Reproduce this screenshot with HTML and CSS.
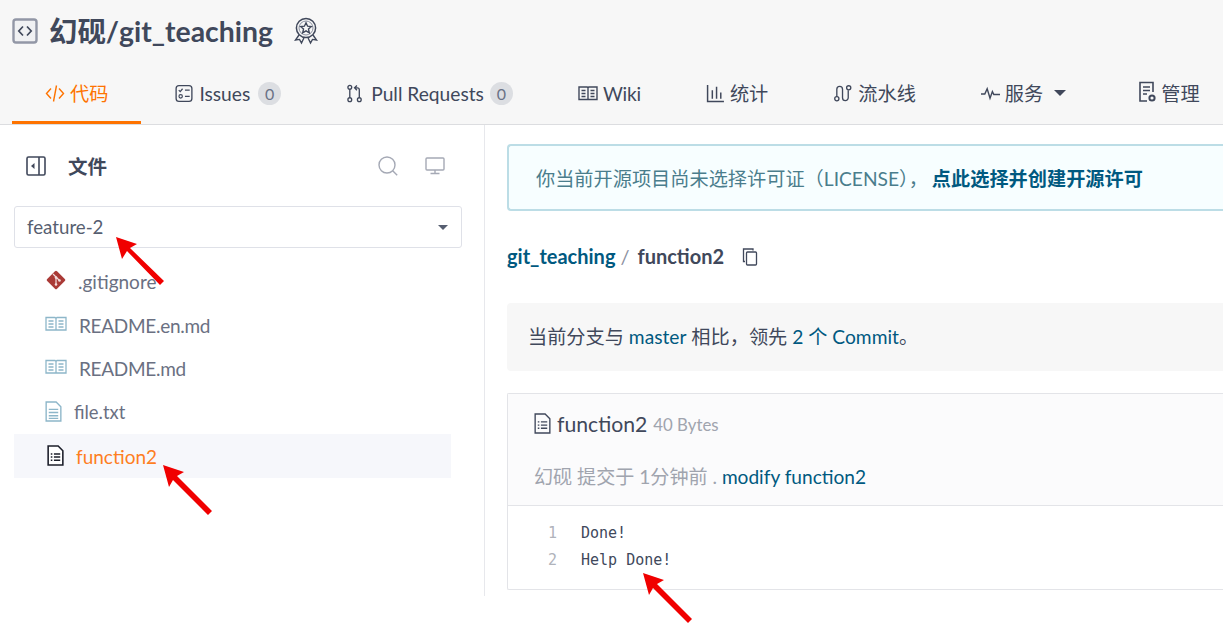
FILE: index.html
```html
<!DOCTYPE html>
<html lang="zh">
<head>
<meta charset="utf-8">
<title>幻砚/git_teaching</title>
<link rel="stylesheet" href="styles.css">
</head>
<body>
<div class="page">
  <header class="header">
    <div class="title-row">
      <svg class="repo-icon" viewBox="0 0 26 26"><rect x="1.5" y="1.5" width="23" height="23" rx="2.5" fill="#f0f1f3" stroke="#9297a6" stroke-width="2.4"/><path d="M11 8.5 6.8 13l4.2 4.5M15 8.5l4.2 4.5-4.2 4.5" fill="none" stroke="#40485b" stroke-width="1.7"/></svg>
      <h1 class="repo-title">幻砚/git_teaching</h1>
      <svg class="badge-icon" viewBox="0 0 24 28"><circle cx="12" cy="11" r="9.6" fill="none" stroke="#40485b" stroke-width="1.5"/><circle cx="12" cy="11" r="7" fill="none" stroke="#8b90a0" stroke-width="1"/><path d="m12 5.8 1.6 3.4 3.7.4-2.8 2.5.8 3.7-3.3-1.9-3.3 1.9.8-3.7-2.8-2.5 3.7-.4z" fill="none" stroke="#40485b" stroke-width="1.4"/><path d="M5 18 1.5 23l4-.6L7.5 26l2.4-5M19 18l3.5 5-4-.6-2 3.6-2.4-5" fill="none" stroke="#40485b" stroke-width="1.4"/></svg>
    </div>
    <nav class="tabs">
      <a class="tab tab-active"><svg class="tab-icon" viewBox="0 0 20 18"><path d="M6 4 1.5 9 6 14M14 4l4.500 5L14 14M11.500 1 8.500 17" fill="none" stroke="currentColor" stroke-width="1.4"/></svg>代码</a>
      <a class="tab"><svg class="tab-icon" viewBox="0 0 20 20"><rect x="1.700" y="1.700" width="16.600" height="16.600" rx="3" fill="none" stroke="currentColor" stroke-width="1.400"/><path d="m4.500 6.500 1.500 1.500 2.500-3M11 6.500h5M11 13h5" fill="none" stroke="currentColor" stroke-width="1.300"/><circle cx="6.500" cy="13" r="1.800" fill="none" stroke="currentColor" stroke-width="1.200"/></svg>Issues<span class="count">0</span></a>
      <a class="tab"><svg class="tab-icon" viewBox="0 0 18 20" preserveAspectRatio="xMinYMid"><circle cx="4" cy="3.500" r="2" fill="none" stroke="currentColor" stroke-width="1.400"/><circle cx="4" cy="16.500" r="2" fill="none" stroke="currentColor" stroke-width="1.400"/><circle cx="14" cy="16.500" r="2" fill="none" stroke="currentColor" stroke-width="1.400"/><path d="M4 5.500v9M14 14.500V6q0-2-2-2H9.500M11.500 1.500 9 4l2.500 2.500" fill="none" stroke="currentColor" stroke-width="1.400"/></svg>Pull Requests<span class="count count-tight">0</span></a>
      <a class="tab tab-wiki"><svg class="tab-icon" viewBox="0 0 20 16"><path d="M1 1.500h8.200l.8.800.8-.8H19v12.500H1zM10 2.500V14M3.500 5H7.500M3.500 8H7.500M3.500 11H7.500M12.500 5h4M12.500 8h4M12.500 11h4" fill="none" stroke="currentColor" stroke-width="1.400"/></svg>Wiki</a>
      <a class="tab"><svg class="tab-icon tab-icon-narrow" viewBox="0 0 18 18"><path d="M1.500 1v15.500H17M6 6v8M10 2.500V14M14 8v6" fill="none" stroke="currentColor" stroke-width="1.400"/></svg>统计</a>
      <a class="tab"><svg class="tab-icon" viewBox="0 0 20 20"><circle cx="3.500" cy="15.500" r="2.200" fill="none" stroke="currentColor" stroke-width="1.400"/><circle cx="16" cy="4" r="2.200" fill="none" stroke="currentColor" stroke-width="1.400"/><path d="M3.500 13.300V5.500a3 3 0 0 1 6 0v9a3 3 0 0 0 6 0V6.500" fill="none" stroke="currentColor" stroke-width="1.400"/></svg>流水线</a>
      <a class="tab"><svg class="tab-icon tab-icon-narrow" viewBox="0 0 20 14"><path d="M0 7.500h4L6.500 2l3 10 2.500-7 1.500 3H20" fill="none" stroke="currentColor" stroke-width="1.500"/></svg>服务<span class="caret caret-nav"></span></a>
      <a class="tab tab-last"><svg class="tab-icon tab-icon-manage" viewBox="0 0 18 22"><path d="M9 20H2V1.500h13V11" fill="none" stroke="currentColor" stroke-width="1.600"/><path d="M5 6h7M5 9.500h7M5 13h4" fill="none" stroke="currentColor" stroke-width="1.500"/><circle cx="14" cy="17" r="2.600" fill="none" stroke="currentColor" stroke-width="2"/></svg>管理</a>
    </nav>
  </header>

  <main class="content">
    <aside class="sidebar">
      <div class="side-head">
        <svg class="collapse-icon" viewBox="0 0 20 20"><rect x="1" y="1" width="18" height="18" rx="1.500" fill="none" stroke="#40485b" stroke-width="1.600"/><path d="M13 1v18" stroke="#40485b" stroke-width="1.600"/><path d="M8.500 7v6L5 10z" fill="#40485b"/></svg>
        <span class="side-title">文件</span>
        <svg class="search-icon" viewBox="0 0 20 20"><circle cx="9" cy="9" r="8" fill="none" stroke="#a5a9b5" stroke-width="1.400"/><path d="m14.700 14.700 4.500 4.500" stroke="#a5a9b5" stroke-width="1.400"/></svg>
        <svg class="screen-icon" viewBox="0 0 20 18"><rect x="1" y="1" width="18" height="12" rx="1" fill="none" stroke="#a5a9b5" stroke-width="1.400"/><path d="M10 13v3M5.500 16.500h9" stroke="#a5a9b5" stroke-width="1.400"/></svg>
      </div>
      <div class="branch">feature-2<span class="caret caret-branch"></span></div>
      <ul class="files">
        <li class="file file-git"><svg class="git-icon" viewBox="0 0 22 22"><rect x="4" y="4" width="14" height="14" rx="1.500" transform="rotate(45 11 11)" fill="#aa3a36"/><path d="M8 5l6.500 6.500M11 8.500v7" stroke="#f3dcdc" stroke-width="1.200"/><circle cx="11" cy="8.500" r="1.300" fill="#f3dcdc"/><circle cx="11" cy="15.500" r="1.300" fill="#f3dcdc"/><circle cx="14.500" cy="11.500" r="1.300" fill="#f3dcdc"/></svg>.gitignore</li>
        <li class="file file-book"><svg class="book-icon" viewBox="0 0 22 16"><path d="M1 1.500h9l1 .8 1-.8h9v12.500H1zM11 2.500V14M3.500 5H8.500M3.500 8H8.500M3.500 11H8.500M13.500 5h5M13.500 8h5M13.500 11h5" fill="none" stroke="#8db6c9" stroke-width="1.300"/></svg>README.en.md</li>
        <li class="file file-book"><svg class="book-icon" viewBox="0 0 22 16"><path d="M1 1.500h9l1 .8 1-.8h9v12.500H1zM11 2.500V14M3.500 5H8.500M3.500 8H8.500M3.500 11H8.500M13.500 5h5M13.500 8h5M13.500 11h5" fill="none" stroke="#8db6c9" stroke-width="1.300"/></svg>README.md</li>
        <li class="file file-txt"><svg class="doc-icon" viewBox="0 0 16 20"><path d="M1 1h9.500L15 5.500V19H1zM3.500 8h9M3.500 11h9M3.500 14h9M3.500 16.500h9" fill="none" stroke="#8db6c9" stroke-width="1.300"/></svg>file.txt</li>
        <li class="file file-active"><svg class="doc-icon" viewBox="0 0 16 20"><path d="M1 1h9.500L15 5.500V19H1z" fill="#fff" stroke="#1c1f2a" stroke-width="1.500"/><path d="M6.500 8.500h6M6.500 11.500h6M6.500 14.500h6M3.500 8.500h1.500M3.500 11.500h1.500M3.500 14.500h1.500" fill="none" stroke="#1c1f2a" stroke-width="1.500"/></svg>function2</li>
      </ul>
    </aside>

    <section class="main">
      <div class="license">你当前开源项目尚未选择许可证（LICENSE），<b class="license-link">点此选择并创建开源许可</b></div>
      <div class="crumbs">
        <a class="crumb-repo">git_teaching</a><span class="crumb-sep">/</span><span class="crumb-file">function2</span>
        <svg class="copy-icon" viewBox="0 0 16 18"><path d="M11 2.500V1H1.500v12.500H3" fill="none" stroke="#40485b" stroke-width="1.300"/><rect x="4.500" y="4" width="10" height="13" rx="1" fill="none" stroke="#40485b" stroke-width="1.300"/></svg>
      </div>
      <div class="compare">当前分支与 <a class="link">master</a> 相比，领先 <a class="link">2 个 Commit</a>。</div>
      <div class="blob">
        <div class="blob-head">
          <div class="blob-name">
            <svg class="doc-icon" viewBox="0 0 16 20"><path d="M1 1h9.500L15 5.500V19H1z" fill="none" stroke="#40485b" stroke-width="1.300"/><path d="M6.500 8.500h6M6.500 11.500h6M6.500 14.500h6M3.500 8.500h1.500M3.500 11.500h1.500M3.500 14.500h1.500" fill="none" stroke="#40485b" stroke-width="1.300"/></svg>
            <span class="blob-file">function2</span><span class="blob-size">40 Bytes</span>
          </div>
          <div class="blob-commit">幻砚 提交于 1分钟前 . <a class="link">modify function2</a></div>
        </div>
        <div class="code">
          <div class="line"><span class="num">1</span><span>Done!</span></div>
          <div class="line"><span class="num">2</span><span>Help Done!</span></div>
        </div>
      </div>
    </section>
  </main>

  <svg class="arrows" viewBox="0 0 1223 630">
    <g fill="#f00000">
      <path d="M116 237l21 7-7 4 34 33-4 4-33-34-5 8z"/>
      <path d="M163 465l21 7-7 4 35 35-4 4-35-35-4 7z"/>
      <path d="M643 573l21 7-7 4 35 35-4 4-35-35-4 7z"/>
    </g>
  </svg>
</div>
</body>
</html>
```

FILE: styles.css
```css
* { box-sizing: border-box; }
html, body { margin: 0; padding: 0; background: #fff; }
body { width: 1223px; height: 630px; overflow: hidden; font-family: Lato, "Noto Sans CJK SC", sans-serif; color: #40485b; }
.page { position: relative; width: 1223px; height: 630px; overflow: hidden; }
a { color: inherit; text-decoration: none; }

.header { height: 125px; background: #f7f7f7; border-bottom: 1px solid #dcdde0; }
.title-row { display: flex; align-items: center; height: 62px; padding-left: 12px; }
.repo-icon { width: 26px; height: 26px; margin-right: 11px; flex: none; }
.repo-title { margin: 0; font-size: 28.400px; font-weight: 700; line-height: 34px; color: #40485b; }
.badge-icon { width: 24px; height: 28px; margin-left: 21px; flex: none; }
.tabs { display: flex; height: 62px; padding-left: 12px; }
.tab { display: flex; align-items: center; flex: none; height: 62px; padding: 3px 32px 0 33px; font-size: 19.200px; white-space: nowrap; color: #40485b; border-bottom: 3px solid transparent; }
.tab-active { color: #fe7300; border-bottom-color: #fe7300; padding-right: 33px; }
.tab-wiki { letter-spacing: -0.2px; }
.tab-last { margin-left: 7px; }
.tab-icon { height: 19px; width: 20px; margin-right: 5px; flex: none; }
.tab-icon-narrow { width: 19px; }
.tab-icon-manage { width: 18px; height: 22px; margin-right: 5px; margin-bottom: 3px; }
.count { display: inline-flex; align-items: center; justify-content: center; width: 23px; height: 23px; margin-left: 8px; border-radius: 50%; background: #dcdee2; color: #6a7286; font-size: 16px; }
.count-tight { margin-left: 6px; }
.caret { display: inline-block; border-style: solid; border-width: 6px 6.500px 0; border-color: #40485b transparent transparent; }
.caret-nav { margin-left: 11px; }

.content { display: flex; align-items: stretch; height: 471px; }
.sidebar { width: 485px; flex: none; border-right: 1px solid #e7e8ec; padding: 0 0 0 14px; }
.side-head { display: flex; align-items: center; height: 81px; padding: 0 40px 0 12px; width: 471px; }
.collapse-icon { width: 20px; height: 20px; flex: none; }
.side-title { margin-left: 22px; font-size: 19.500px; font-weight: 700; color: #40485b; }
.search-icon { width: 20px; height: 20px; margin-left: auto; flex: none; }
.screen-icon { width: 20px; height: 18px; margin-left: 27px; flex: none; }
.branch { display: flex; align-items: center; justify-content: space-between; width: 448px; height: 42px; padding: 0 13px 0 12px; border: 1px solid #dfe1e8; border-radius: 3px; font-size: 18.700px; color: #565e70; }
.caret-branch { border-width: 5px 5px 0; border-top-color: #565e70; }
.files { list-style: none; margin: 12px 0 0; padding: 0; width: 437px; }
.file { display: flex; align-items: center; height: 43.500px; padding-left: 31px; font-size: 19px; color: #6a7082; }
.file-book { letter-spacing: -0.3px; }
.file-txt { font-size: 18.400px; }
.file-active { height: 44px; background: #f6f7fb; color: #fe7e1f; padding-left: 33px; }
.git-icon { width: 22px; height: 22px; margin: 0 11px 4px 0; flex: none; }
.book-icon { width: 22px; height: 16px; margin-right: 12px; margin-bottom: 3px; flex: none; }
.doc-icon { width: 17px; height: 21px; margin-right: 12px; flex: none; margin-bottom: 2px; }

.main { width: 738px; flex: none; padding: 19px 0 0 22px; }
.license { display: flex; align-items: center; height: 67px; width: 760px; padding-left: 27px; background: #f7feff; border: 2px solid #bcdde6; border-right: 0; border-radius: 4px 0 0 4px; font-size: 19.200px; color: #4a7d8c; }
.license-link { margin-left: 4px; color: #005980; font-weight: 700; }
.crumbs { display: flex; align-items: center; height: 30px; margin-top: 30px; font-size: 20px; font-weight: 700; }
.crumb-repo { color: #005980; }
.crumb-sep { margin: 0 8px 0 5px; color: #8b90a0; font-weight: 400; }
.crumb-file { color: #40485b; }
.copy-icon { width: 16px; height: 18px; margin-left: 18px; margin-top: 2px; flex: none; }
.compare { display: flex; align-items: center; white-space: pre; height: 68px; width: 760px; margin-top: 32px; padding: 0 0 2px 21px; background: #f7f7f7; border-radius: 4px 0 0 4px; font-size: 19.200px; color: #40485b; }
.link { color: #005980; }
.blob { width: 760px; margin-top: 22px; border: 1px solid #e3e4e8; border-right: 0; border-radius: 2px 0 0 2px; }
.blob-head { height: 112px; padding: 12px 0 0 26px; background: #fbfbfc; border-bottom: 1px solid #e3e4e8; }
.blob-name { display: flex; align-items: center; height: 36px; }
.blob-head .doc-icon { margin-right: 6px; }
.blob-file { font-size: 21.200px; color: #40485b; }
.blob-size { margin-left: 6px; font-size: 16.800px; color: #a0a4ae; }
.blob-commit { margin-top: 20px; font-size: 19.100px; color: #a0a4ae; white-space: pre; }
.code { height: 83px; padding-top: 13px; font-family: "DejaVu Sans Mono", monospace; font-size: 15px; color: #40485b; }
.line { display: flex; height: 27.500px; align-items: center; }
.num { width: 73px; padding-left: 40px; color: #b0b3bb; }

.arrows { position: absolute; left: 0; top: 0; width: 1223px; height: 630px; pointer-events: none; }
```
